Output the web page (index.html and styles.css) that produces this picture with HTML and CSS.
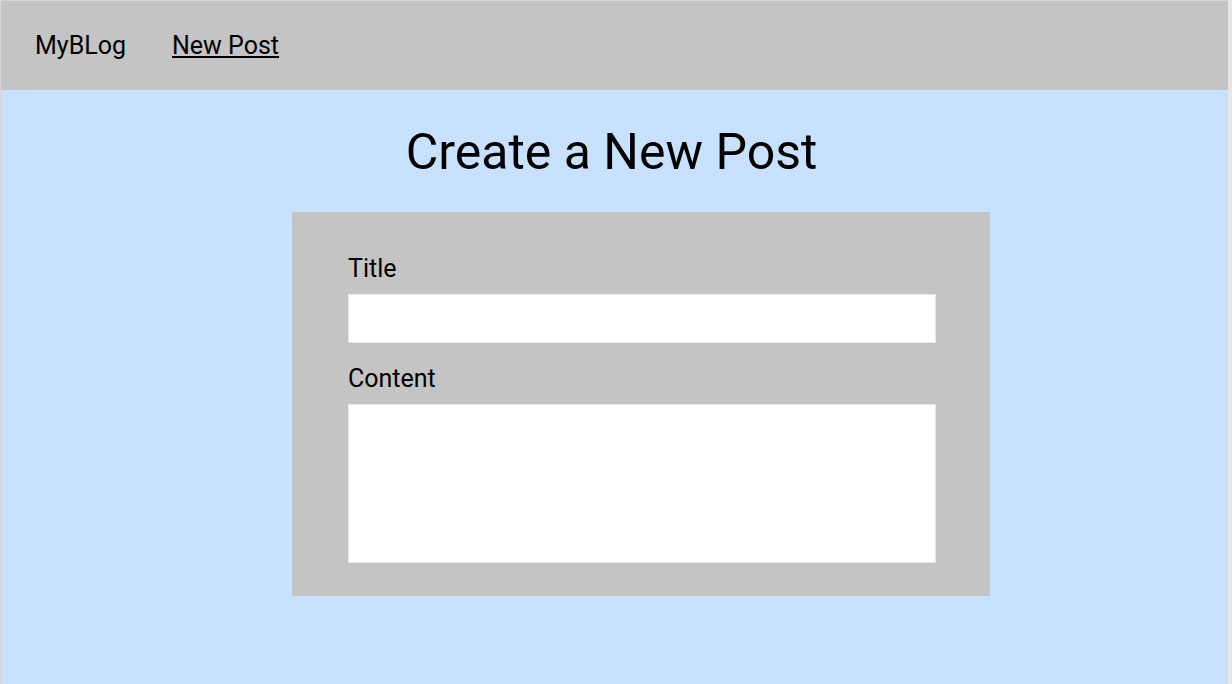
FILE: index.html
```html
<!DOCTYPE html>
<html lang="en">
<head>
<meta charset="utf-8">
<title>MyBLog - New Post</title>
<link rel="stylesheet" href="styles.css">
</head>
<body>
<div class="app">
  <header class="topbar">
    <span class="brand">MyBLog</span>
    <a class="nav-link" href="#">New Post</a>
  </header>
  <main class="main">
    <h1 class="page-title">Create a New Post</h1>
    <form class="post-form">
      <label class="field-label" for="title">Title</label>
      <input class="field-input" id="title" type="text">
      <label class="field-label" for="content">Content</label>
      <textarea class="field-textarea" id="content"></textarea>
    </form>
  </main>
</div>
</body>
</html>
```
FILE: styles.css
```css
html, body {
  margin: 0;
  padding: 0;
  height: 100%;
}
body {
  background: #e6e6e6;
  font-family: Roboto, "Liberation Sans", sans-serif;
  color: #000;
}
.app {
  box-sizing: border-box;
  width: 1228px;
  height: 684px;
  border-top: 1px solid #d6d6d6;
  border-left: 1px solid #d6d6d6;
  background: #c8e1ff;
  display: flex;
  flex-direction: column;
}
.topbar {
  height: 89px;
  flex: none;
  background: #c4c4c4;
  display: flex;
  align-items: center;
  padding-left: 34px;
  gap: 46px;
  font-size: 25px;
}
.brand {
  color: #000;
}
.nav-link {
  color: #000;
  text-decoration: underline;
}
.main {
  display: flex;
  flex-direction: column;
  align-items: center;
}
.page-title {
  margin: 31px 6px 0 0;
  font-size: 50px;
  font-weight: 400;
  line-height: 62px;
}
.post-form {
  box-sizing: border-box;
  width: 698px;
  height: 384px;
  margin-top: 29px;
  margin-left: 53px;
  background: #c4c4c4;
  padding: 41px 54px 0 56px;
  display: flex;
  flex-direction: column;
}
.field-label {
  font-size: 25px;
  line-height: 32px;
  margin-bottom: 9px;
}
.field-input,
.field-textarea {
  box-sizing: border-box;
  width: 588px;
  background: #fff;
  border: 1px solid #e8e8e8;
  margin: 0;
  font-family: inherit;
  font-size: 20px;
  resize: none;
}
.field-input {
  height: 49px;
  margin-bottom: 20px;
}
.field-textarea {
  height: 159px;
}
```
